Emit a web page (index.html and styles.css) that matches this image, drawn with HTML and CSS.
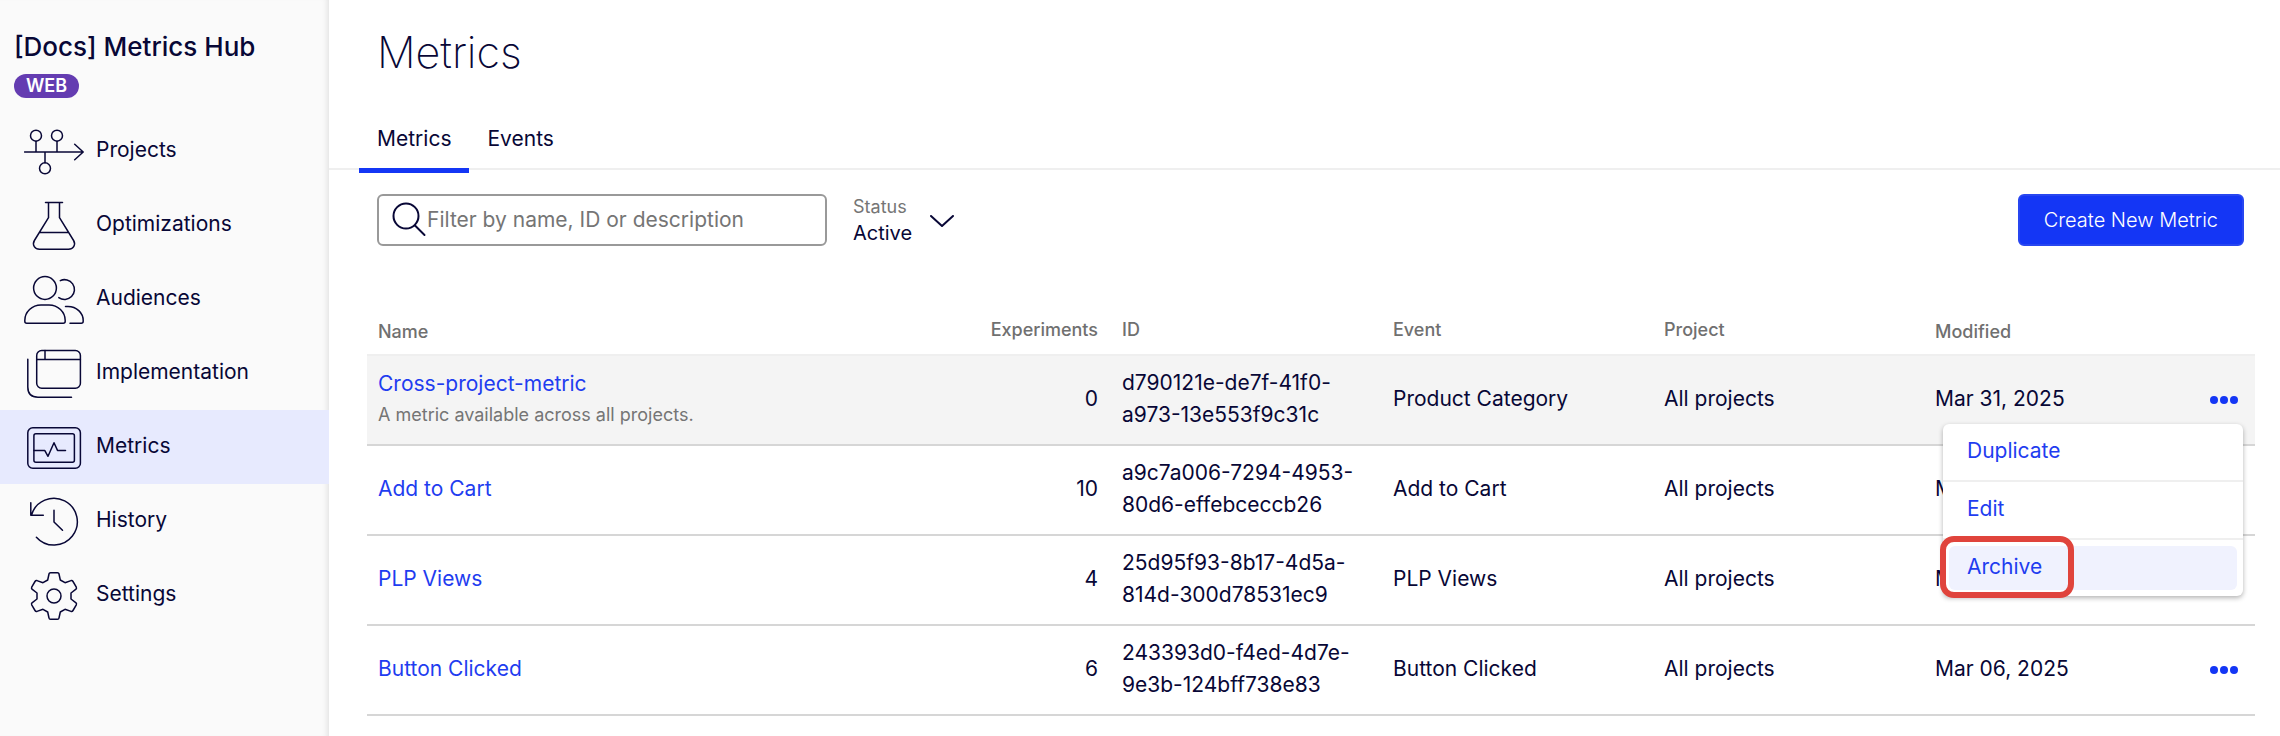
FILE: index.html
```html
<!DOCTYPE html>
<html lang="en">
<head>
  <meta charset="utf-8">
  <title>Metrics</title>
  <link rel="stylesheet" href="styles.css">
</head>
<body>
<div class="app">
  <aside class="sidebar">
    <div class="project-name">[Docs] Metrics Hub</div>
    <span class="badge">WEB</span>
    <nav class="nav">
      <a class="nav-item" href="#projects">
        <svg class="nav-icon" viewBox="0 0 60 60" aria-hidden="true">
          <circle cx="12" cy="14.7" r="5.5"/><circle cx="33" cy="14.7" r="5.5"/><circle cx="21" cy="47.3" r="5.5"/>
          <path d="M.5 31H59M50.7 23.3L59.2 31L50.7 38.7M12 20.2V31M33 20.2V31M21 31V41.8"/>
        </svg>
        Projects
      </a>
      <a class="nav-item" href="#optimizations">
        <svg class="nav-icon" viewBox="0 0 60 60" aria-hidden="true">
          <path d="M21.5 7.5H38.5M24.5 7.5V22.7L10.4 45.5C7.8 50 11 54.2 15.5 54.2H44.5C49 54.2 52.2 50 49.6 45.5L35.5 22.7V7.5M15.3 37.4H44.7"/>
        </svg>
        Optimizations
      </a>
      <a class="nav-item" href="#audiences">
        <svg class="nav-icon" viewBox="0 0 60 60" aria-hidden="true">
          <circle cx="21" cy="19" r="11.4"/>
          <path d="M.8 51.5C.8 43 8 36 17 36H25C34 36 41.2 43 41.2 51.5V52.2Q41.2 54.2 39.2 54.2H2.8Q.8 54.2.8 52.2Z"/>
          <path d="M36.3 11.6A9.9 9.9 0 1 1 34.8 28.6M41.5 37.4H44C52.5 37.4 59.2 44 59.2 51.5V52.2Q59.2 54.2 57.2 54.2H46"/>
        </svg>
        Audiences
      </a>
      <a class="nav-item" href="#implementation">
        <svg class="nav-icon" viewBox="0 0 60 60" aria-hidden="true">
          <rect x="12.7" y="7.6" width="43.7" height="37.7" rx="5"/>
          <path d="M12.7 16.5H56.4M21 7.6V16.5M3.8 16.3V44Q3.8 54.2 14 54.2H47.5"/>
        </svg>
        Implementation
      </a>
      <a class="nav-item active" href="#metrics">
        <svg class="nav-icon" viewBox="0 0 60 60" aria-hidden="true">
          <rect x="3.8" y="10.7" width="52.6" height="40.6" rx="5"/>
          <rect x="9.9" y="16.7" width="40.5" height="28.6" rx="2"/>
          <path d="M10 33.4H20.7L24 39.3L30 25.7L33.5 33.4H41.5"/>
        </svg>
        Metrics
      </a>
      <a class="nav-item" href="#history">
        <svg class="nav-icon" viewBox="0 0 60 60" aria-hidden="true">
          <path d="M7.5 24A23.4 23.4 0 1 1 12.4 46.2M6.8 11.8V24.2H19.3M30 19.3V31L38.5 39.3"/>
        </svg>
        History
      </a>
      <a class="nav-item" href="#settings">
        <svg class="nav-icon" viewBox="0 0 60 60" aria-hidden="true">
          <circle cx="30" cy="31" r="7"/>
          <path d="M26.5 7.7H33.5Q34.8 7.7 35 9L36.3 15L41 17.7L47 15.6Q48.3 15.3 49 16.5L52.3 22.2Q52.8 23.4 52 24.2L47 28V34L52 37.8Q52.8 38.6 52.3 39.8L49 45.5Q48.3 46.7 47 46.4L41 44.3L36.3 47L35 53Q34.8 54.3 33.5 54.3H26.5Q25.2 54.3 25 53L23.7 47L19 44.3L13 46.4Q11.7 46.7 11 45.5L7.7 39.8Q7.2 38.6 8 37.8L13 34V28L8 24.2Q7.2 23.4 7.7 22.2L11 16.5Q11.7 15.3 13 15.6L19 17.7L23.7 15L25 9Q25.2 7.7 26.5 7.7Z"/>
        </svg>
        Settings
      </a>
    </nav>
  </aside>

  <main class="main">
    <h1 class="title">Metrics</h1>

    <nav class="tabs">
      <a class="tab active" href="#metrics">Metrics</a>
      <a class="tab" href="#events">Events</a>
    </nav>

    <div class="toolbar">
      <label class="search">
        <svg class="search-icon" viewBox="0 0 36 36" aria-hidden="true">
          <circle cx="15" cy="14" r="12.5"/><path d="M24 23.5L33.5 33"/>
        </svg>
        <input class="search-input" type="text" placeholder="Filter by name, ID or description" aria-label="Filter by name, ID or description">
      </label>
      <div class="status">
        <div class="status-field">
          <label class="status-label" for="status">Status</label>
          <select class="status-select" id="status">
            <option>Active</option>
            <option>Archived</option>
          </select>
        </div>
        <svg class="chevron" viewBox="0 0 24 12" aria-hidden="true"><path d="M1 1L12 11L23 1"/></svg>
      </div>
      <button class="create" type="button">Create New Metric</button>
    </div>

    <table class="metrics">
      <colgroup>
        <col>
        <col class="col-experiments">
        <col class="col-wide">
        <col class="col-wide">
        <col class="col-wide">
        <col class="col-wide">
        <col class="col-actions">
      </colgroup>
      <thead>
        <tr>
          <th class="sortable">Name</th>
          <th class="number">Experiments</th>
          <th>ID</th>
          <th>Event</th>
          <th>Project</th>
          <th class="sortable">Modified</th>
          <th></th>
        </tr>
      </thead>
      <tbody>
        <tr class="selected">
          <td><a class="link" href="#m1">Cross-project-metric</a><div class="desc">A metric available across all projects.</div></td>
          <td class="number">0</td>
          <td class="id">d790121e-de7f-41f0-a973-13e553f9c31c</td>
          <td>Product Category</td>
          <td>All projects</td>
          <td>Mar 31, 2025</td>
          <td class="actions">
            <div class="dropdown">
              <button class="more" type="button" aria-label="More actions">
                <svg class="dots" viewBox="0 0 28 8"><circle cx="4" cy="4" r="4"/><circle cx="14" cy="4" r="4"/><circle cx="24" cy="4" r="4"/></svg>
              </button>
              <ul class="menu">
                <li class="menu-row"><button class="menu-item" type="button">Duplicate</button></li>
                <li class="menu-row"><button class="menu-item" type="button">Edit</button></li>
                <li class="menu-row marked"><button class="menu-item hover" type="button">Archive</button></li>
              </ul>
            </div>
          </td>
        </tr>
        <tr>
          <td><a class="link" href="#m2">Add to Cart</a></td>
          <td class="number">10</td>
          <td class="id">a9c7a006-7294-4953-80d6-effebceccb26</td>
          <td>Add to Cart</td>
          <td>All projects</td>
          <td>Mar 06, 2025</td>
          <td></td>
        </tr>
        <tr>
          <td><a class="link" href="#m3">PLP Views</a></td>
          <td class="number">4</td>
          <td class="id">25d95f93-8b17-4d5a-814d-300d78531ec9</td>
          <td>PLP Views</td>
          <td>All projects</td>
          <td>Mar 06, 2025</td>
          <td></td>
        </tr>
        <tr>
          <td><a class="link" href="#m4">Button Clicked</a></td>
          <td class="number">6</td>
          <td class="id">243393d0-f4ed-4d7e-9e3b-124bff738e83</td>
          <td>Button Clicked</td>
          <td>All projects</td>
          <td>Mar 06, 2025</td>
          <td class="actions">
            <div class="dropdown">
              <button class="more" type="button" aria-label="More actions">
                <svg class="dots" viewBox="0 0 28 8"><circle cx="4" cy="4" r="4"/><circle cx="14" cy="4" r="4"/><circle cx="24" cy="4" r="4"/></svg>
              </button>
            </div>
          </td>
        </tr>
      </tbody>
    </table>
  </main>
</div>
</body>
</html>
```
FILE: styles.css
```css
*,
*::after {
  box-sizing: border-box;
}

body {
  margin: 0;
  background: #fff;
  color: #080736;
  font-family: Inter, sans-serif;
  font-size: 21px;
  line-height: 32px;
}

a {
  color: inherit;
  text-decoration: none;
}

button,
input,
select {
  font: inherit;
  color: inherit;
}

.app {
  display: flex;
  min-height: 100vh;
}

/* sidebar */
.sidebar {
  flex: 0 0 329px;
  padding-top: 29px;
  background: #fafafa;
  box-shadow: inset -6px 0 6px -5px rgba(0, 0, 0, 0.12);
}

.project-name {
  padding-left: 14px;
  font-size: 26px;
  font-weight: 500;
  line-height: 36px;
}

.badge {
  display: block;
  width: 65px;
  height: 24px;
  margin: 9px 0 16px 14px;
  border-radius: 12px;
  background: #643cb1;
  color: #fff;
  font-size: 18px;
  font-weight: 600;
  line-height: 24px;
  text-align: center;
}

.nav-item {
  display: flex;
  align-items: center;
  gap: 12px;
  height: 74px;
  padding: 0 0 2px 24px;
}

.nav-item.active {
  background: #e7eafe;
}

.nav-icon {
  width: 60px;
  height: 60px;
  margin-top: 2px;
}

.nav-icon,
.search-icon,
.chevron {
  flex: none;
  fill: none;
  stroke: #080736;
  stroke-width: 1.5;
  stroke-linecap: round;
  stroke-linejoin: round;
}

/* main */
.main {
  flex: 1;
  min-width: 0;
}

.title {
  margin: 0;
  padding: 24px 48px 0;
  font-size: 43px;
  font-weight: 200;
  line-height: 56px;
}

.tabs {
  display: flex;
  margin-top: 36px;
  padding-left: 30px;
  border-bottom: 2px solid #efefef;
}

.tab {
  height: 57px;
  margin-bottom: -5px;
  padding: 7px 18px 0;
}

.tab.active {
  border-bottom: 5px solid #1436f5;
}

.toolbar {
  display: flex;
  align-items: center;
  padding: 24px 36px 0 48px;
}

.search {
  display: flex;
  align-items: center;
  width: 450px;
  height: 52px;
  padding-left: 12px;
  border: 2px solid #999;
  border-radius: 6px;
}

.search-icon {
  width: 36px;
  height: 36px;
  stroke-width: 2;
}

.search-input {
  flex: 1;
  min-width: 0;
  padding: 0;
  border: 0;
  outline: 0;
  background: none;
}

.search-input::placeholder {
  color: #757575;
  opacity: 1;
}

.status {
  display: flex;
  align-items: center;
  gap: 18px;
  margin-left: 26px;
}

.status-field {
  display: flex;
  flex-direction: column;
}

.status-label {
  color: #757575;
  font-size: 18px;
  line-height: 26px;
}

.status-select {
  appearance: none;
  padding: 0;
  border: 0;
  background: none;
  font-size: 20px;
  line-height: 26px;
  field-sizing: content;
}

.chevron {
  width: 24px;
  height: 12px;
  margin-top: 2px;
  stroke-width: 2;
}

.create {
  height: 52px;
  margin-left: auto;
  padding: 0 24px;
  border: 2px solid #2846f0;
  border-radius: 6px;
  background: #1436f5;
  color: #fff;
  font-size: 20px;
  font-weight: 300;
}

/* table */
.metrics {
  width: calc(100% - 63px);
  margin: 64px 25px 0 38px;
  border-collapse: separate;
  border-spacing: 0;
  table-layout: fixed;
}

.col-experiments {
  width: 160px;
}

.col-wide {
  width: 271px;
}

.col-actions {
  width: 60px;
}

.metrics th {
  height: 46px;
  padding: 0 13px 10px 11px;
  border-bottom: 2px solid #efefef;
  color: #707070;
  font-size: 18px;
  font-weight: 500;
  line-height: 28px;
  text-align: left;
  vertical-align: bottom;
}

.metrics th.sortable {
  padding-bottom: 8px;
}

.metrics td {
  height: 90px;
  padding: 11px 13px 13px 11px;
  border-bottom: 2px solid #d6d6d6;
}

.metrics .number {
  text-align: right;
}

.metrics .id {
  padding-right: 24px;
}

.metrics .actions {
  padding: 12px;
}

.selected td {
  background: #f4f4f4;
}

.link {
  color: #1f3df0;
}

.desc {
  color: #757575;
  font-size: 18px;
  line-height: 30px;
}

.dropdown {
  display: flex;
  justify-content: flex-end;
  position: relative;
}

.more {
  display: flex;
  align-items: center;
  height: 24px;
  padding: 0 5px;
  border: 0;
  background: none;
}

.dots {
  width: 28px;
  height: 8px;
  fill: #1436f5;
}

.menu {
  position: absolute;
  top: 36px;
  right: 0;
  z-index: 1;
  width: 300px;
  margin: 0;
  padding: 0;
  border-radius: 6px;
  background: #fff;
  box-shadow: 0 2px 5px rgba(0, 0, 0, 0.3);
  list-style: none;
}

.menu-row {
  padding: 6px;
}

.menu-row + .menu-row {
  border-top: 2px solid #efefef;
}

.menu-item {
  display: block;
  width: 100%;
  height: 44px;
  padding: 0 18px 2px;
  border: 0;
  border-radius: 6px;
  background: none;
  color: #1f3df0;
  text-align: left;
}

.menu-item.hover {
  background: #f0f2fe;
}

/* outline around the archive entry */
.marked {
  position: relative;
}

.marked::after {
  content: "";
  position: absolute;
  top: -4px;
  left: -3px;
  width: 134px;
  height: 62px;
  border: 6px solid #e0443c;
  border-radius: 14px;
  pointer-events: none;
}
```
